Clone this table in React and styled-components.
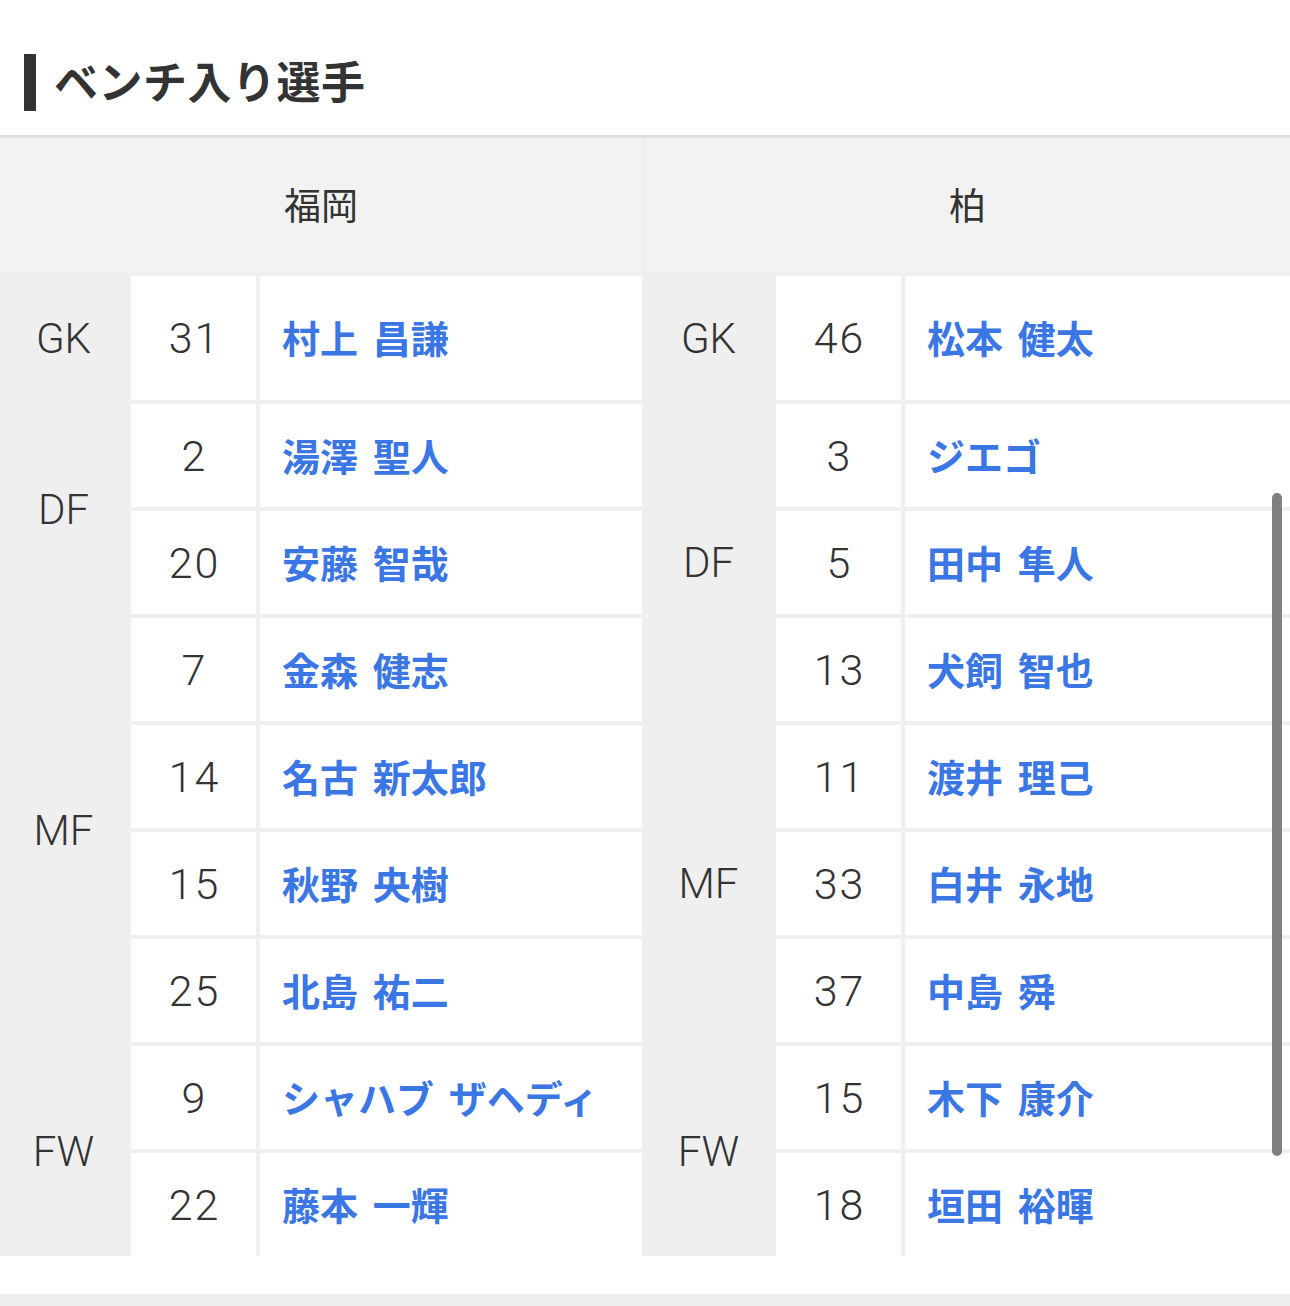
import React from "react";
import styled, { createGlobalStyle } from "styled-components";

const GlobalStyle = createGlobalStyle`
  html, body {
    margin: 0;
    padding: 0;
    background: #fff;
    overflow: hidden;
  }
  body {
    font-family: "Liberation Sans", "Noto Sans CJK JP", sans-serif;
    color: #333;
  }
`;

const Page = styled.div`
  width: 1290px;
  height: 1306px;
  position: relative;
  background: #fff;
`;

const Section = styled.section`
  display: flex;
  flex-direction: column;
`;

const TitleRow = styled.div`
  display: flex;
  align-items: center;
  padding: 54px 0 24px 24px;
  border-bottom: 3px solid #dedede;
`;
const TitleBar = styled.div`
  width: 12px;
  height: 57px;
  background: #333;
`;
const Title = styled.h2`
  margin: -4px 0 0 18px;
  font-family: "Noto Sans CJK JP", sans-serif;
  font-size: 44px;
  font-weight: 700;
  line-height: 57px;
  color: #333;
  letter-spacing: 0.5px;
`;

const Board = styled.div`
  display: flex;
  gap: 3px;
  background: #efefef;
`;

const Team = styled.div`
  display: flex;
  flex-direction: column;
  width: ${(p) => (p.$width ? `${p.$width}px` : "auto")};
  flex: ${(p) => (p.$width ? "none" : "1")};
`;

const TeamHead = styled.div`
  height: 134px;
  margin-bottom: 4px;
  background: #f2f2f2;
  display: flex;
  align-items: center;
  justify-content: center;
  padding-bottom: 3px;
  box-sizing: border-box;
  font-family: "Noto Sans CJK JP", sans-serif;
  font-size: 37px;
  color: #333;
`;

const Grid = styled.div`
  display: grid;
  grid-template-columns: 127px 125px 1fr;
  grid-template-rows: 124px repeat(8, 103px);
  gap: 4px;
`;

const Pos = styled.div`
  grid-row: span ${(p) => p.$span};
  display: flex;
  align-items: center;
  justify-content: center;
  font-family: "Roboto", "Liberation Sans", sans-serif;
  font-weight: 300;
  font-size: 42px;
  color: #333;
  background: #efefef;
`;

const Num = styled.div`
  background: #fff;
  display: flex;
  align-items: center;
  justify-content: center;
  font-family: "Roboto", "Liberation Sans", sans-serif;
  font-weight: 300;
  font-variant-numeric: tabular-nums;
  font-size: 43px;
  letter-spacing: 2px;
  padding-left: 2px;
  color: #333;
`;

const Name = styled.div`
  background: #fff;
  display: flex;
  align-items: center;
  padding: 0 0 3px 22px;
  font-family: "Noto Sans CJK JP", sans-serif;
  font-size: 38px;
  font-weight: 700;
  word-spacing: 6px;
  color: #3a76e4;
`;

const Spacer = styled.div`
  height: 38px;
`;
const BottomStrip = styled.div`
  height: 12px;
  background: #efefef;
`;

const ScrollThumb = styled.div`
  position: absolute;
  left: 1272px;
  top: 493px;
  width: 10px;
  height: 663px;
  border-radius: 5px;
  background: #7f7f7f;
`;

const teams = [
  {
    name: "福岡",
    width: 642,
    groups: [
      { pos: "GK", players: [["31", "村上 昌謙"]] },
      { pos: "DF", players: [["2", "湯澤 聖人"], ["20", "安藤 智哉"]] },
      {
        pos: "MF",
        players: [
          ["7", "金森 健志"],
          ["14", "名古 新太郎"],
          ["15", "秋野 央樹"],
          ["25", "北島 祐二"],
        ],
      },
      { pos: "FW", players: [["9", "シャハブ ザヘディ"], ["22", "藤本 一輝"]] },
    ],
  },
  {
    name: "柏",
    groups: [
      { pos: "GK", players: [["46", "松本 健太"]] },
      {
        pos: "DF",
        players: [["3", "ジエゴ"], ["5", "田中 隼人"], ["13", "犬飼 智也"]],
      },
      {
        pos: "MF",
        players: [["11", "渡井 理己"], ["33", "白井 永地"], ["37", "中島 舜"]],
      },
      { pos: "FW", players: [["15", "木下 康介"], ["18", "垣田 裕暉"]] },
    ],
  },
];

function TeamColumn({ team }) {
  return (
    <Team $width={team.width}>
      <TeamHead>{team.name}</TeamHead>
      <Grid>
        {team.groups.map((g) =>
          g.players.map(([num, name], i) => (
            <React.Fragment key={g.pos + num}>
              {i === 0 && <Pos $span={g.players.length}>{g.pos}</Pos>}
              <Num>{num}</Num>
              <Name>{name}</Name>
            </React.Fragment>
          ))
        )}
      </Grid>
    </Team>
  );
}

export default function App() {
  return (
    <Page>
      <GlobalStyle />
      <Section>
        <TitleRow>
          <TitleBar />
          <Title>ベンチ入り選手</Title>
        </TitleRow>
        <Board>
          {teams.map((t) => (
            <TeamColumn key={t.name} team={t} />
          ))}
        </Board>
        <Spacer />
        <BottomStrip />
      </Section>
      <ScrollThumb />
    </Page>
  );
}
